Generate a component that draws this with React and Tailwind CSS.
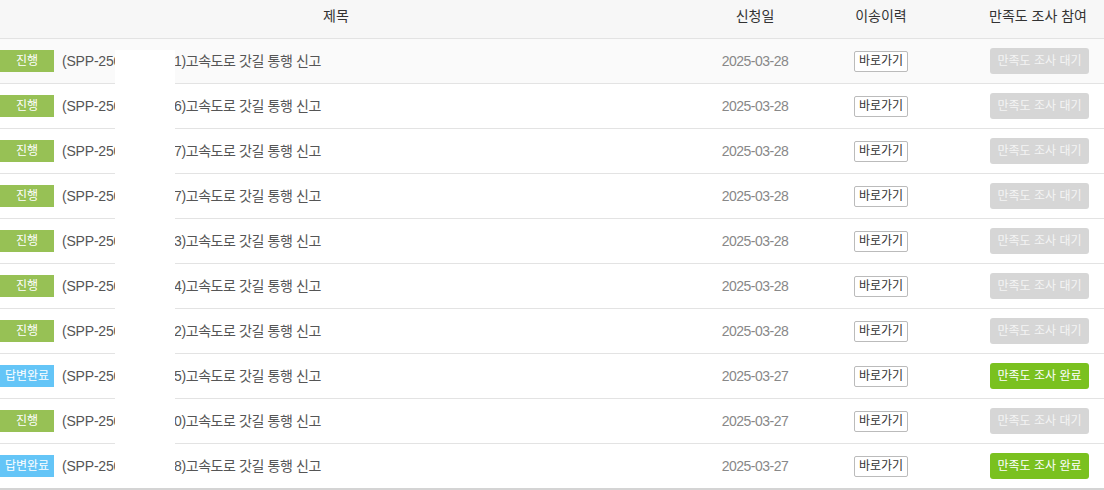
import React from "react";

const rows = [
  { s: "진행", n: "1", d: "2025-03-28", done: false },
  { s: "진행", n: "6", d: "2025-03-28", done: false },
  { s: "진행", n: "7", d: "2025-03-28", done: false },
  { s: "진행", n: "7", d: "2025-03-28", done: false },
  { s: "진행", n: "3", d: "2025-03-28", done: false },
  { s: "진행", n: "4", d: "2025-03-28", done: false },
  { s: "진행", n: "2", d: "2025-03-28", done: false },
  { s: "답변완료", n: "5", d: "2025-03-27", done: true },
  { s: "진행", n: "0", d: "2025-03-27", done: false },
  { s: "답변완료", n: "8", d: "2025-03-27", done: true },
];

const font = { fontFamily: '"Liberation Sans", "Noto Sans CJK KR", sans-serif' };

export default function App() {
  return (
    <div className="relative w-[1104px] h-[490px] bg-white overflow-hidden" style={font}>
      <div className="grid grid-cols-[672px_166px_86px_1fr] h-[39px] bg-[#f7f7f7] border-b border-[#e3e3e3] text-[14px] text-[#333] items-center">
        <div className="text-center pb-[6px]">제목</div>
        <div className="text-center pb-[6px]">신청일</div>
        <div className="text-center pb-[6px]">이송이력</div>
        <div className="text-right pr-[17px] pb-[6px]">만족도 조사 참여</div>
      </div>
      {rows.map((r, i) => (
        <div
          key={i}
          className={
            "grid grid-cols-[672px_166px_86px_1fr] items-center " +
            (i === rows.length - 1 ? "border-b-2 border-[#d4d4d4] h-[46px] " : "border-b border-[#e3e3e3] h-[45px] ") +
            (i === 0 ? "bg-[#fafafa]" : "bg-white")
          }
        >
          <div className="flex items-center text-[14px] text-[#555] whitespace-nowrap">
            <span
              className={
                "w-[54px] h-[22px] flex items-center justify-center text-[12px] text-white " +
                (r.s === "진행" ? "bg-[#97c155]" : "bg-[#64c5f7]")
              }
            >
              {r.s}
            </span>
            <span className="ml-[8px] w-[53px] overflow-hidden tracking-[-0.2px]">(SPP-2503-0000</span>
            <span className="ml-[59px] tracking-[-0.4px]">{r.n})고속도로 갓길 통행 신고</span>
          </div>
          <div className="text-center text-[14px] text-[#888] tracking-[-0.5px]">{r.d}</div>
          <div className="flex justify-center">
            <span className="w-[54px] h-[21px] border border-[#bbb] rounded-[2px] bg-white text-[12px] text-[#333] flex items-center justify-center">
              바로가기
            </span>
          </div>
          <div className="flex justify-end pr-[15px]">
            <span
              className={
                "w-[99px] h-[26px] rounded-[3px] flex items-center justify-center text-[12px] " +
                (r.done ? "bg-[#7ac11f] text-white" : "bg-[#d6d6d6] text-[#f4f4f4]")
              }
            >
              {r.done ? "만족도 조사 완료" : "만족도 조사 대기"}
            </span>
          </div>
        </div>
      ))}
      <div className="absolute left-[115px] top-[50px] w-[60px] h-[428px] bg-white" />
    </div>
  );
}
